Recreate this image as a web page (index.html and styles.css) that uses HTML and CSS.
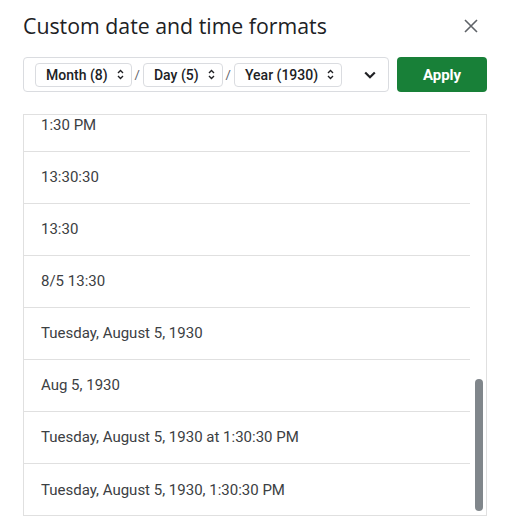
FILE: index.html
```html
<!DOCTYPE html>
<html>
<head>
<meta charset="utf-8">
<link rel="stylesheet" href="styles.css">
</head>
<body>
<div class="dialog">
  <div class="header">
    <h1 class="title">Custom date and time formats</h1>
    <button class="close" aria-label="Close">
      <svg width="14" height="14" viewBox="0 0 14 14"><path d="M1 1L13 13M13 1L1 13" stroke="#5f6368" stroke-width="1.6" fill="none"/></svg>
    </button>
  </div>
  <div class="toolbar">
    <div class="format-box">
      <span class="chip">Month (8)<svg class="updown" width="7" height="11" viewBox="0 0 7 11"><path d="M1 4L3.5 1.5L6 4M1 7L3.5 9.5L6 7" stroke="#202124" stroke-width="1.4" fill="none"/></svg></span>
      <span class="sep">/</span>
      <span class="chip">Day (5)<svg class="updown" width="7" height="11" viewBox="0 0 7 11"><path d="M1 4L3.5 1.5L6 4M1 7L3.5 9.5L6 7" stroke="#202124" stroke-width="1.4" fill="none"/></svg></span>
      <span class="sep">/</span>
      <span class="chip">Year (1930)<svg class="updown" width="7" height="11" viewBox="0 0 7 11"><path d="M1 4L3.5 1.5L6 4M1 7L3.5 9.5L6 7" stroke="#202124" stroke-width="1.4" fill="none"/></svg></span>
      <svg class="expand" width="12" height="8" viewBox="0 0 12 8"><path d="M1.2 1.5L6 6.2L10.8 1.5" stroke="#202124" stroke-width="2.2" fill="none"/></svg>
    </div>
    <button class="apply">Apply</button>
  </div>
  <div class="list">
    <div class="list-inner">
      <div class="row">1:30 PM</div>
      <div class="row">13:30:30</div>
      <div class="row">13:30</div>
      <div class="row">8/5 13:30</div>
      <div class="row">Tuesday, August 5, 1930</div>
      <div class="row">Aug 5, 1930</div>
      <div class="row">Tuesday, August 5, 1930 at 1:30:30 PM</div>
      <div class="row last">Tuesday, August 5, 1930, 1:30:30 PM</div>
    </div>
    <div class="thumb"></div>
  </div>
</div>
</body>
</html>
```
FILE: styles.css
```css
* { box-sizing: border-box; }
html, body { margin: 0; padding: 0; background: #fff; }
body { font-family: Roboto, "Liberation Sans", sans-serif; color: #202124; }

.dialog {
  width: 510px;
  padding: 0 23px;
}

.header {
  display: flex;
  align-items: center;
  justify-content: space-between;
  padding-top: 12px;
  height: 40px;
}
.title {
  margin: 0;
  font-family: "Open Sans", Roboto, sans-serif;
  font-weight: 400;
  font-size: 21.3px;
  line-height: 28px;
  color: #202124;
  letter-spacing: 0;
}
.close {
  width: 24px;
  height: 24px;
  margin-right: 4px;
  padding: 0;
  border: 0;
  background: none;
  display: flex;
  align-items: center;
  justify-content: center;
}

.toolbar {
  display: flex;
  gap: 8px;
  margin-top: 17px;
  height: 35px;
}
.format-box {
  width: 366px;
  height: 35px;
  border: 1px solid #dadce0;
  border-radius: 4px;
  display: flex;
  align-items: center;
  padding: 0 11px;
}
.chip {
  display: inline-flex;
  align-items: center;
  height: 24px;
  border: 1px solid #dadce0;
  border-radius: 4px;
  padding: 0 7px 0 10px;
  font-size: 14px;
  font-weight: 500;
  color: #202124;
  gap: 9px;
}
.sep {
  font-size: 13px;
  color: #5f6368;
  margin: 0 3px;
}
.expand { margin-left: auto; margin-right: 1px; }

.apply {
  width: 90px;
  height: 35px;
  border: 0;
  border-radius: 4px;
  background: #188038;
  color: #fff;
  font-family: Roboto, sans-serif;
  font-size: 15px;
  font-weight: 700;
  padding: 0;
}

.list {
  position: relative;
  margin-top: 22px;
  height: 402px;
  border: 1px solid #e0e0e0;
  overflow: hidden;
}
.list-inner {
  margin-top: -15px;
  margin-right: 16px;
}
.row {
  height: 52px;
  border-bottom: 1px solid #e0e0e0;
  display: flex;
  align-items: center;
  padding-left: 17px;
  padding-bottom: 1px;
  font-size: 15px;
  color: #3c4043;
}
.row.last { border-bottom: 0; }
.thumb {
  position: absolute;
  right: 3px;
  top: 264px;
  width: 8px;
  height: 132px;
  border-radius: 4px;
  background: #80868b;
}
```
